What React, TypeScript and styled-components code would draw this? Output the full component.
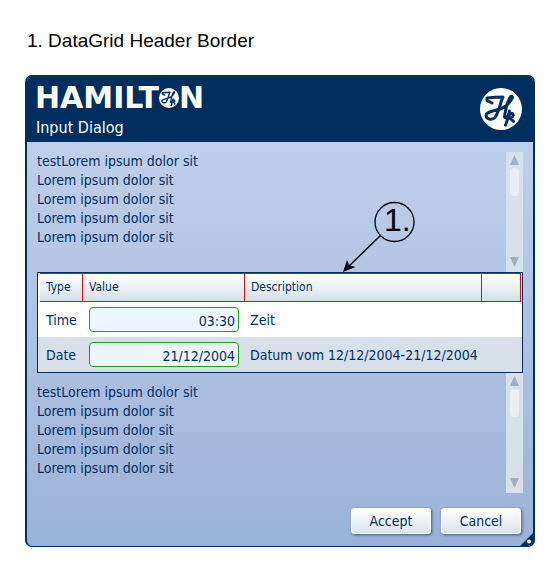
import React from "react";
import styled, { createGlobalStyle } from "styled-components";

const NAVY = "#002f5f";
const RED = "#f00";

const GlobalStyle = createGlobalStyle`
  * { box-sizing: border-box; }
  body {
    margin: 0;
    background: #fff;
    color: ${NAVY};
    font: 14px/19px "DejaVu Sans Condensed", "DejaVu Sans", sans-serif;
  }
`;

const Page = styled.main`
  padding: 28px 25px 25px;
`;

const Caption = styled.h1`
  margin: 0 0 22px 2px;
  font: 19px/25px "Liberation Sans", sans-serif;
  color: #000;
`;

const Dialog = styled.section`
  position: relative;
  overflow: hidden;
  border: solid ${NAVY};
  border-width: 0 2px 1px;
  border-radius: 7px;
  background: linear-gradient(#c5d4ed, #9bb2d8);
`;

const Header = styled.header`
  display: flex;
  align-items: center;
  justify-content: space-between;
  height: 67px;
  padding: 0 11px 0 8px;
  background: ${NAVY};
  color: #fff;
`;

const Titles = styled.div`
  padding-top: 4px;
`;

const Brand = styled.div`
  display: flex;
  align-items: center;
  height: 28px;
  font: bold 30px/28px "DejaVu Sans", sans-serif;
`;

const DialogTitle = styled.h2`
  margin: 6px 0 0 1px;
  font: 16px/20px "DejaVu Sans Condensed", "DejaVu Sans", sans-serif;
`;

const Content = styled.div`
  padding: 10px 10px 12px;
`;

const Scroller = styled.div`
  display: flex;
  justify-content: space-between;
  height: 120px;
`;

const Lines = styled.div<{ $inset: number }>`
  padding-top: ${(p) => p.$inset}px;
  white-space: pre-line;
`;

const ScrollBar = styled.div`
  display: flex;
  flex-direction: column;
  align-items: center;
  justify-content: space-between;
  width: 17px;
  padding-bottom: 2px;
  background: #d7e1eb;
`;

const ScrollButton = styled.button`
  display: block;
  width: 17px;
  height: 16px;
  padding: 0;
  border: 0;
  background: none;
  color: #9db0c6;
  svg { display: block; margin: auto; }
`;

const Thumb = styled.div`
  width: 9px;
  height: 28px;
  margin-bottom: auto;
  border-radius: 4px;
  background: #e9eff5;
`;

const GridArea = styled.div`
  position: relative;
`;

const Grid = styled.table`
  width: 100%;
  table-layout: fixed;
  border-collapse: separate;
  border-spacing: 0;
  border: 1px solid ${NAVY};
  background: #fff;
`;

const HeadCell = styled.th<{ $width?: number }>`
  width: ${(p) => (p.$width ? p.$width + "px" : "auto")};
  padding: 0;
  font-weight: normal;
  font-size: 12px;
  text-align: left;
`;

const HeadLabel = styled.div<{ $first?: boolean; $last?: boolean }>`
  height: 29px;
  margin-left: ${(p) => (p.$first ? 2 : 0)}px;
  margin-right: ${(p) => (p.$last ? 1 : 0)}px;
  padding: 0 6px;
  border: solid ${RED};
  border-width: 1px 1px 1px 0;
  line-height: 27px;
  background: linear-gradient(#fff, #d5dfe8);
`;

const Row = styled.tr`
  height: 35px;
  &:nth-child(even) { background: #d7e0e9; }
`;

const Cell = styled.td<{ $pad: number }>`
  padding: 2px 0 0 ${(p) => p.$pad}px;
  white-space: nowrap;
`;

const FieldCell = styled(Cell)`
  padding-top: 0;
`;

const Field = styled.input`
  display: block;
  width: 150px;
  height: 25px;
  padding: 3px 3px 1px;
  border: 1px solid #12a80c;
  border-radius: 4px;
  outline: 0;
  background: #edf5fe;
  color: ${NAVY};
  font: inherit;
  text-align: right;
`;

const Callout = styled.svg`
  position: absolute;
  left: 300px;
  bottom: 100%;
  pointer-events: none;
  text { font: 32px "Liberation Sans", sans-serif; }
`;

const Actions = styled.footer`
  display: flex;
  justify-content: flex-end;
  gap: 10px;
  padding: 15px 2px 0 0;
`;

const Button = styled.button`
  width: 80px;
  height: 26px;
  padding: 0;
  border: 1px solid #fff;
  border-radius: 3px;
  background: linear-gradient(#fff, #dae3ec);
  box-shadow: 1px 1px 3px #40587c;
  color: ${NAVY};
  font: inherit;
`;

const Grip = styled.svg`
  position: absolute;
  right: -1px;
  bottom: -1px;
`;

function Emblem({ size, weight }: { size: number; weight: number }) {
  return (
    <svg width={size} height={size} viewBox="0 0 42 42" aria-hidden="true">
      <circle cx="21" cy="21" r="21" fill="#fff" />
      <g fill="none" stroke={NAVY} strokeWidth={weight} strokeLinecap="round" strokeLinejoin="round">
        <path d="M12 15 7 12.500V10q8-1 16-1C20 15 19 24 15 29.500 12 32.500 6 31 6 27.500 6 23.500 13 23.500 20 21 25 19.500 29 16 32 10.500c1.500-2.500-1-3-2-1C27 15 25 25 24.500 29c.5 2 3.500 0 5-3" />
        <path d="M29.500 23C28 29 27 34 25.500 37M28 28c3-4 6-2.500 5 0-.7 1.800-3 2-4.500 1.500 2 .5 3 2 5 4" />
      </g>
    </svg>
  );
}

function ScrollTrack() {
  return (
    <ScrollBar>
      <ScrollButton type="button" aria-label="Scroll up">
        <svg width="9" height="10"><path d="M4.500 0 9 10H0z" fill="currentColor" /></svg>
      </ScrollButton>
      <Thumb />
      <ScrollButton type="button" aria-label="Scroll down">
        <svg width="9" height="10"><path d="M4.500 10 9 0H0z" fill="currentColor" /></svg>
      </ScrollButton>
    </ScrollBar>
  );
}

const text = ["testLorem ipsum dolor sit", ...Array(4).fill("Lorem ipsum dolor sit")].join("\n");

function TextPanel({ inset = 0 }: { inset?: number }) {
  return (
    <Scroller>
      <Lines $inset={inset}>{text}</Lines>
      <ScrollTrack />
    </Scroller>
  );
}

const rows = [
  { type: "Time", value: "03:30", description: "Zeit" },
  { type: "Date", value: "21/12/2004", description: "Datum vom 12/12/2004-21/12/2004" },
];

export default function App() {
  return (
    <Page>
      <GlobalStyle />
      <Caption>1. DataGrid Header Border</Caption>
      <Dialog role="dialog" aria-labelledby="dialog-title">
        <Header>
          <Titles>
            <Brand>HAMILT<Emblem size={20} weight={3} />N</Brand>
            <DialogTitle id="dialog-title">Input Dialog</DialogTitle>
          </Titles>
          <Emblem size={42} weight={3} />
        </Header>
        <Content>
          <TextPanel />
          <GridArea>
            <Grid>
              <thead>
                <tr>
                  <HeadCell $width={45}><HeadLabel $first>Type</HeadLabel></HeadCell>
                  <HeadCell $width={162}><HeadLabel>Value</HeadLabel></HeadCell>
                  <HeadCell><HeadLabel>Description</HeadLabel></HeadCell>
                  <HeadCell $width={40}><HeadLabel $last /></HeadCell>
                </tr>
              </thead>
              <tbody>
                {rows.map((row) => (
                  <Row key={row.type}>
                    <Cell $pad={8} id={row.type}>{row.type}</Cell>
                    <FieldCell $pad={6}><Field aria-labelledby={row.type} defaultValue={row.value} /></FieldCell>
                    <Cell $pad={5} colSpan={2}>{row.description}</Cell>
                  </Row>
                ))}
              </tbody>
            </Grid>
            <Callout width="80" height="72" viewBox="0 0 80 72">
              <circle cx="57.500" cy="22" r="19.500" fill="none" stroke="#000" strokeWidth="1.300" />
              <path d="M43.500 35.500 12 66" fill="none" stroke="#000" strokeWidth="1.400" />
              <path d="M6 72 10 60l2 5L18.500 67z" fill="#000" />
              <text x="47" y="31">1.</text>
            </Callout>
          </GridArea>
          <TextPanel inset={10} />
          <Actions>
            <Button type="button">Accept</Button>
            <Button type="button">Cancel</Button>
          </Actions>
        </Content>
        <Grip width="15" height="15" viewBox="0 0 15 15" aria-hidden="true">
          <path d="M15 0v15H0z" fill={NAVY} />
          <circle cx="10" cy="9.500" r="2" fill="#fff" />
        </Grip>
      </Dialog>
    </Page>
  );
}
